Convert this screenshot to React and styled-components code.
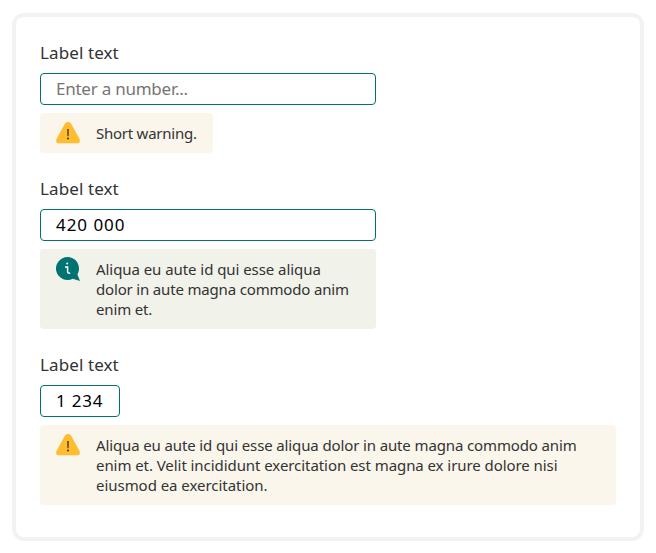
import React from "react";
import styled, { createGlobalStyle } from "styled-components";

const GlobalStyle = createGlobalStyle`
  *, *::before, *::after { box-sizing: border-box; }
  body {
    margin: 0;
    background: #fff;
    color: #333;
    font-family: "Noto Sans", "Open Sans", sans-serif;
  }
`;

const Page = styled.main`
  padding: 13px 12px 12px;
`;

const Card = styled.section`
  height: 528px;
  padding: 24px;
  border: 4px solid #f2f2f3;
  border-radius: 12px;
  display: flex;
  flex-direction: column;
  gap: 24px;
`;

const Field = styled.div`
  display: flex;
  flex-direction: column;
  align-items: flex-start;
  gap: 8px;
`;

const Label = styled.label`
  display: block;
  height: 24px;
  line-height: 24px;
  font-size: 17px;
  letter-spacing: 0.1px;
`;

const Input = styled.input`
  display: block;
  width: ${(p) => p.$width}px;
  height: 32px;
  padding: 0 15px 2px;
  border: 1px solid #007272;
  border-radius: 4px;
  background: #fff;
  color: #000;
  font: inherit;
  font-size: 17px;
  letter-spacing: ${(p) => p.$spacing || 0}px;
  outline: none;
  &::placeholder { color: #757575; opacity: 1; }
`;

const LabelledInput = styled.div`
  display: flex;
  flex-direction: column;
  gap: 8px;
`;

const Message = styled.div`
  display: flex;
  gap: 16px;
  width: ${(p) => p.$width}px;
  padding: 8px 16px;
  border-radius: 4px;
  background: ${(p) => (p.$tone === "info" ? "#f1f2ea" : "#faf6eb")};
`;

const MessageText = styled.p`
  margin: 0;
  padding: 2px 0;
  font-size: 15px;
  line-height: 20px;
  white-space: nowrap;
`;

const Line = styled.span`
  display: block;
  letter-spacing: ${(p) => p.$spacing || 0}px;
`;

const Icon = styled.svg`
  display: block;
  flex: none;
  width: 24px;
  height: 24px;
`;

const WarningIcon = () => (
  <Icon viewBox="0 0 24 24" aria-hidden="true">
    <path
      fill="#ffbc2f"
      d="M9 2.6C10.2.5 13.8.5 15 2.6l8.5 15.5c1.1 2-.1 4.2-2.4 4.2H2.9c-2.3 0-3.5-2.2-2.4-4.2Z"
    />
    <path fill="#4a402b" d="M11.2 8h1.6l-.15 7.2h-1.3Z" />
    <circle cx="12" cy="17.5" r="1.1" fill="#4a402b" />
  </Icon>
);

const InfoIcon = () => (
  <Icon viewBox="0 0 24 24" aria-hidden="true">
    <path
      fill="#007272"
      d="M11.5 0C17.9 0 23 5.1 23 11.5c0 2.2-.6 4.2-1.6 5.9l2.6 6.6-7.2-2.3A11.5 11.5 0 1 1 11.5 0Z"
    />
    <circle cx="11.2" cy="6.6" r="1" fill="#fff" />
    <path fill="none" stroke="#fff" strokeWidth="1.5" d="M9 10h2.6v4.6c0 1.2.7 1.7 2.6 1.6" />
  </Icon>
);

const fields = [
  {
    width: 336,
    placeholder: "Enter a number...",
    spacing: -0.24,
    tone: "warning",
    messageWidth: 173,
    lines: [["Short warning.", -0.25]],
  },
  {
    width: 336,
    value: "420 000",
    spacing: 0.95,
    tone: "info",
    messageWidth: 336,
    lines: [
      ["Aliqua eu aute id qui esse aliqua", -0.06],
      ["dolor in aute magna commodo anim", -0.17],
      ["enim et.", -0.15],
    ],
  },
  {
    width: 80,
    value: "1 234",
    spacing: 0.8,
    tone: "warning",
    messageWidth: 576,
    lines: [
      ["Aliqua eu aute id qui esse aliqua dolor in aute magna commodo anim", -0.125],
      ["enim et. Velit incididunt exercitation est magna ex irure dolore nisi", -0.065],
      ["eiusmod ea exercitation.", -0.04],
    ],
  },
];

export default function App() {
  return (
    <>
      <GlobalStyle />
      <Page>
        <Card>
          {fields.map((f, i) => (
            <Field key={i}>
              <LabelledInput>
                <Label htmlFor={`field-${i}`}>Label text</Label>
                <Input
                  id={`field-${i}`}
                  $width={f.width}
                  $spacing={f.spacing}
                  placeholder={f.placeholder}
                  defaultValue={f.value}
                />
              </LabelledInput>
              <Message $tone={f.tone} $width={f.messageWidth}>
                {f.tone === "info" ? <InfoIcon /> : <WarningIcon />}
                <MessageText>
                  {f.lines.map(([text, spacing]) => (
                    <Line key={text} $spacing={spacing}>{text}</Line>
                  ))}
                </MessageText>
              </Message>
            </Field>
          ))}
        </Card>
      </Page>
    </>
  );
}
